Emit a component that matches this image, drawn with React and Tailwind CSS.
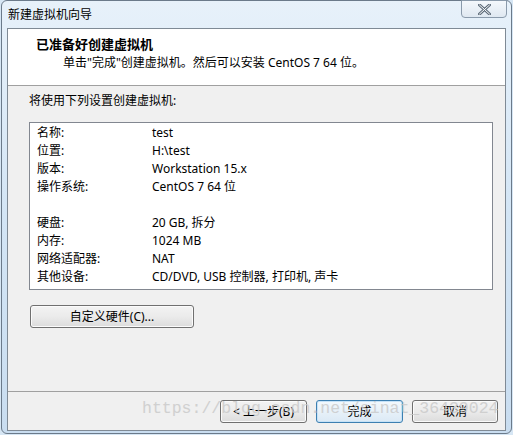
const rows = [
  ["名称:", "test"],
  ["位置:", "H:\\test"],
  ["版本:", "Workstation 15.x"],
  ["操作系统:", "CentOS 7 64 位"],
  ["", ""],
  ["硬盘:", "20 GB, 拆分"],
  ["内存:", "1024 MB"],
  ["网络适配器:", "NAT"],
  ["其他设备:", "CD/DVD, USB 控制器, 打印机, 声卡"],
];

const font = "font-['Noto_Sans','Noto_Sans_CJK_SC',sans-serif]";

const WinButton = ({ children, primary, className = "" }) => (
  <div
    className={`h-[23px] flex items-center justify-center rounded-[3px] border text-[12px] text-black ${
      primary
        ? "border-[#3c7fb1] bg-gradient-to-b from-[#f4f9fd] to-[#dbe9f5] shadow-[inset_0_0_0_1px_#c6e2f7]"
        : "border-[#707070] bg-gradient-to-b from-[#f3f3f3] via-[#ebebeb] to-[#dcdcdc] shadow-[inset_0_0_0_1px_#fbfbfb]"
    } ${className}`}
  >
    {children}
  </div>
);

export default function App() {
  return (
    <div className={`w-[513px] h-[435px] overflow-hidden relative bg-[#d6e6f4] ${font}`}>
      {/* window frame */}
      <div className="ml-px w-[511px] h-[434px] rounded-[6px] border border-[#6b7a8a] bg-gradient-to-b from-[#e7f1fa] via-[#d3e5f5] to-[#c9ddf0] flex flex-col px-[5px]">
        {/* title bar */}
        <div className="h-[27px] flex items-start justify-between">
          <span className="mt-[5px] ml-[1px] text-[12px] text-black">新建虚拟机向导</span>
          <div className="w-[46px] h-[18px] -mt-px mr-[-1px] rounded-b-[4px] border border-[#8a9aab] bg-gradient-to-b from-[#f4f8fc] to-[#dfe8f1] flex items-center justify-center">
            <svg width="13" height="11" viewBox="0 0 13 11">
              <path d="M1.5 1 L11.5 10 M11.5 1 L1.5 10" stroke="#5d6b79" strokeWidth="3" strokeLinecap="round" />
              <path d="M1.5 1 L11.5 10 M11.5 1 L1.5 10" stroke="#fff" strokeWidth="1" strokeLinecap="round" />
            </svg>
          </div>
        </div>

        {/* client area */}
        <div className="w-[499px] h-[403px] border border-[#7f8a95] flex flex-col bg-[#f0f0f0]">
          <div className="h-[57px] bg-white border-b border-[#a0a0a0] flex flex-col">
            <div className="mt-[6px] ml-[28px] text-[13px] font-bold leading-[18px]">已准备好创建虚拟机</div>
            <div className="ml-[55px] mt-[1px] text-[12px] leading-[18px]">单击"完成"创建虚拟机。然后可以安装 CentOS 7 64 位。</div>
          </div>

          <div className="flex-1 flex flex-col pl-[21px] relative">
            <div className="mt-[7px] text-[12px] leading-[16px]">将使用下列设置创建虚拟机:</div>
            <div className="mt-[13px] w-[464px] h-[168px] bg-white border border-[#828790] pt-[1px]">
              {rows.map(([k, v], i) => (
                <div key={i} className="h-[18px] flex items-center text-[12px]">
                  <span className="w-[122px] pl-[7px]">{k}</span>
                  <span>{v}</span>
                </div>
              ))}
            </div>
            <WinButton className="mt-[15px] ml-[1px] w-[164px]">自定义硬件(C)...</WinButton>

            <div className="mt-[63px] -ml-[21px] mr-0 border-t border-[#a0a0a0]" />
            <div className="mt-[8px] flex justify-end gap-[9px] pr-[7px]">
              <WinButton className="w-[87px]">&lt; 上一步(B)</WinButton>
              <WinButton primary className="w-[87px]">完成</WinButton>
              <WinButton className="w-[86px]">取消</WinButton>
            </div>

            {/* watermark */}
            <div className="absolute left-[134px] top-[311px] font-['Liberation_Mono',monospace] text-[16.5px] text-[#c9c9c9] opacity-80 pointer-events-none whitespace-nowrap">
              https://blog.csdn.net/sinat_36439024
            </div>
          </div>
        </div>
      </div>
    </div>
  );
}
